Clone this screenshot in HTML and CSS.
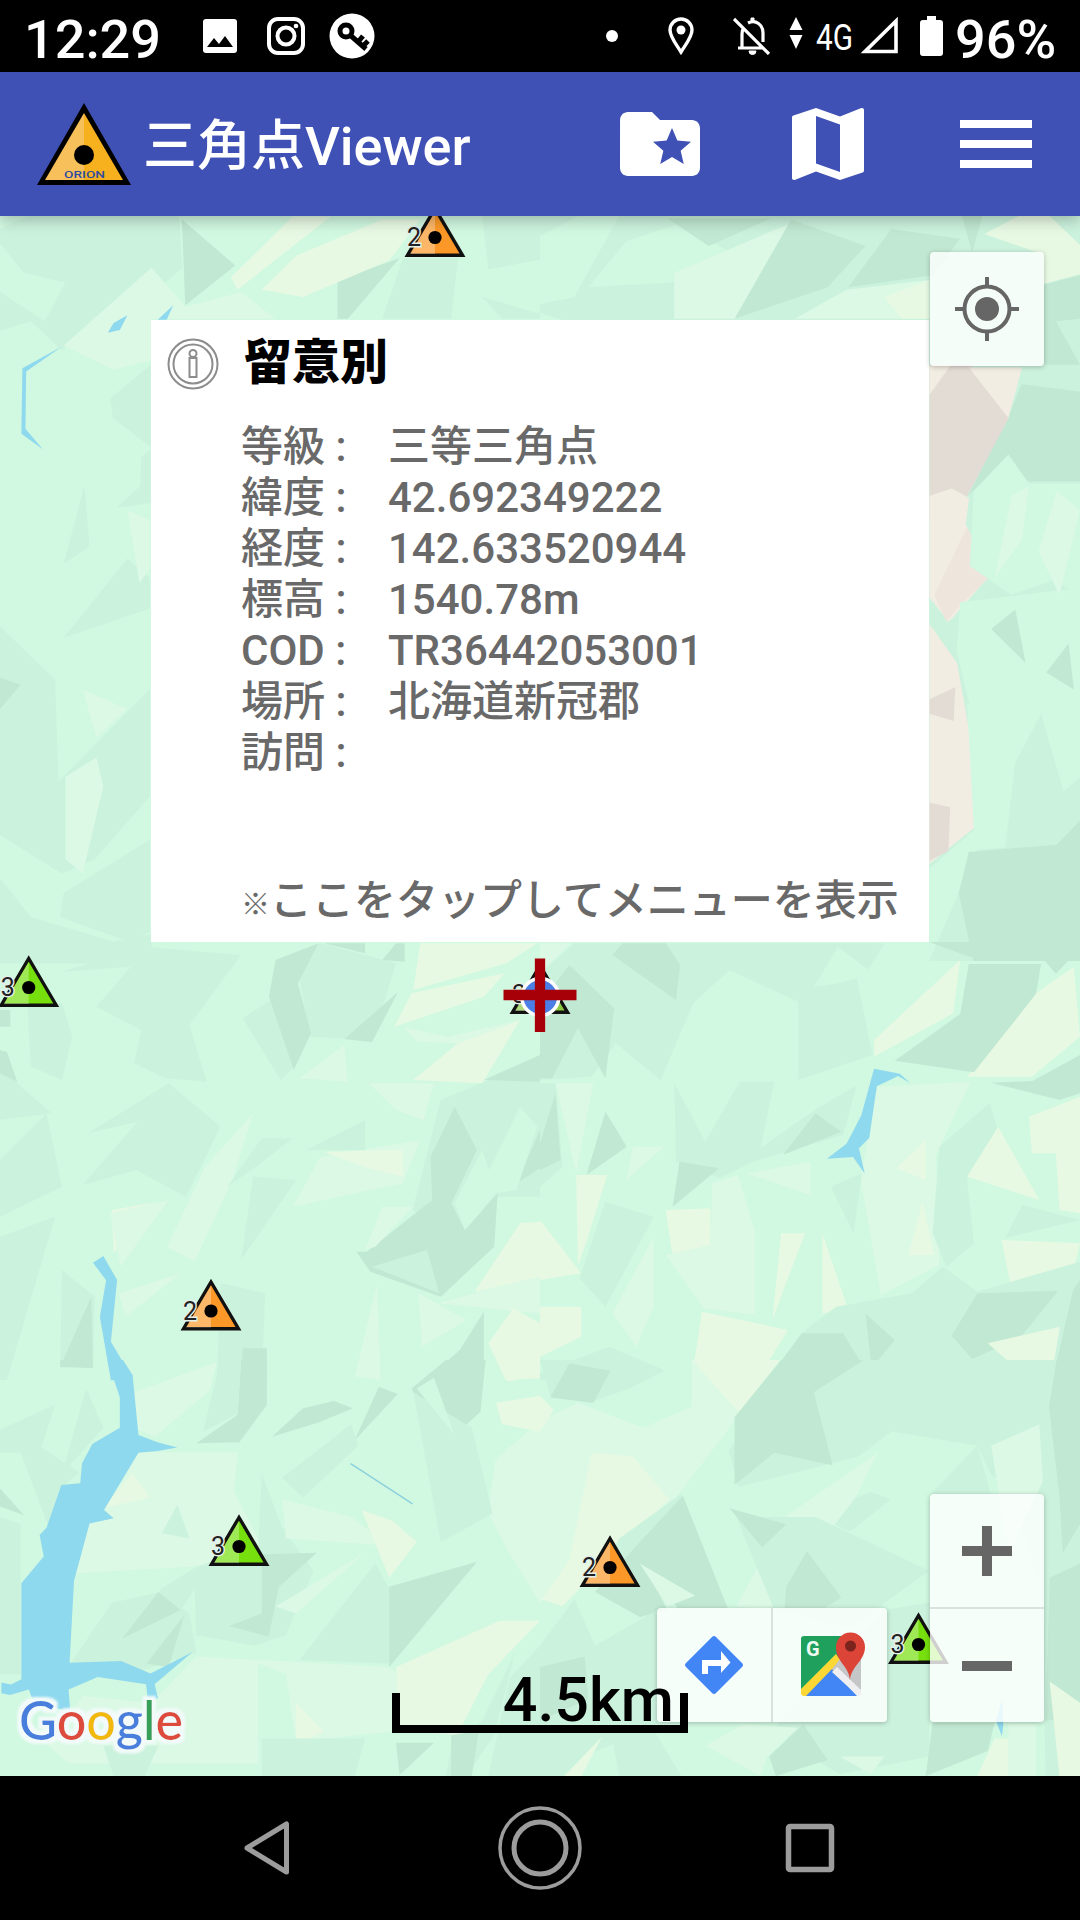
FILE: index.html
```html
<!DOCTYPE html>
<html lang="ja">
<head>
    <meta charset="UTF-8">
    <meta name="viewport" content="width=device-width, initial-scale=1.0">
    <title>三角点Viewer</title>
    <link rel="stylesheet" href="styles.css">
</head>
<body>

    <!-- Status bar -->
    <div class="status-bar">
        <span class="clock">12:29</span>
        <svg class="st-image" width="34" height="34" viewBox="0 0 34 34"><rect width="34" height="34" rx="3" fill="#fff"/><path d="M4 28l7-9 5 6 6-8 8 11z"/></svg>
        <svg class="st-insta" width="38" height="38" viewBox="0 0 38 38" fill="none" stroke="#fff" stroke-width="4"><rect x="2" y="2" width="34" height="34" rx="9"/><circle cx="19" cy="19" r="8.5"/><circle cx="29" cy="9" r="2.3" fill="#fff" stroke="none"/></svg>
        <svg class="st-key" width="46" height="46" viewBox="0 0 46 46"><circle cx="23" cy="23" r="22.5" fill="#fff"/><circle cx="17" cy="18" r="6" fill="none" stroke="#000" stroke-width="5"/><path d="M21 22l16 14M29 29l5-6M34 33l5-5" stroke="#000" stroke-width="5" fill="none"/></svg>
        <span class="spacer"></span>
        <svg class="st-dot" width="12" height="12" viewBox="0 0 12 12"><circle cx="6" cy="6" r="6" fill="#fff"/></svg>
        <svg class="st-pin" width="26" height="38" viewBox="0 0 26 38" fill="none" stroke="#fff" stroke-width="3.4"><path d="M13 35C8 27 2 20 2 13a11 11 0 0 1 22 0c0 7-6 14-11 22z"/><circle cx="13" cy="13" r="4.5" fill="#fff" stroke="none"/></svg>
        <svg class="st-bell" width="38" height="38" viewBox="0 0 38 38" fill="none" stroke="#fff" stroke-width="3.2"><path d="M1 2l35 35M5 31h25M9 30V17c0-3 1-5 2-6M15 6c8-4 15 2 15 10v9"/><path d="M16 34h7a3.500 3.500 0 0 1-7 0zM18 4V1h3v3" fill="#fff" stroke-width="1"/></svg>
        <svg class="st-arrows" width="14" height="32" viewBox="0 0 14 32" fill="#fff"><path d="M7 0l6.500 13H.5zM7 32L.5 18h13z"/></svg>
        <svg class="st-4g" width="40" height="44" viewBox="0 0 40 44"><text x="1" y="36" font-size="37" textLength="37" lengthAdjust="spacingAndGlyphs" fill="#fff">4G</text></svg>
        <svg class="st-signal" width="40" height="40" viewBox="0 0 40 40"><path d="M5 36.500h31V6z" fill="none" stroke="#fff" stroke-width="3.6"/></svg>
        <svg class="st-battery" width="23" height="40" viewBox="0 0 23 40" fill="#fff"><path d="M7 0h9v4h4a3 3 0 0 1 3 3v30a3 3 0 0 1-3 3H3a3 3 0 0 1-3-3V7a3 3 0 0 1 3-3h4z"/></svg>
        <span class="percent">96%</span>
    </div>

    <!-- App header -->
    <div class="header">
        <svg class="logo" width="96" height="84" viewBox="0 0 96 84">
            <path d="M48 1L95 83H1z"/>
            <path d="M48 11L9 78h39z" fill="#f8c05a"/>
            <path d="M48 11v67h39z" fill="#f7b11f"/>
            <circle cx="48" cy="53" r="10"/>
            <text x="28" y="75.500" font-size="9.500" font-weight="500" textLength="41" lengthAdjust="spacingAndGlyphs" fill="#2c4ba0">ORION</text>
        </svg>
        <h1>三角点Viewer</h1>
        <div class="actions">
            <svg width="96" height="96" viewBox="0 0 24 24" fill="#fff"><path d="M20 6h-8l-2-2H4c-1.100 0-1.990.9-1.990 2L2 18c0 1.100.9 2 2 2h16c1.100 0 2-.9 2-2V8c0-1.100-.9-2-2-2zm-2.060 11L15 15.280 12.060 17l.78-3.330-2.590-2.240 3.410-.29L15 8l1.340 3.140 3.410.29-2.590 2.240.78 3.330z"/></svg>
            <svg width="96" height="96" viewBox="0 0 24 24" fill="#fff"><path d="M20.500 3l-.16.03L15 5.100 9 3 3.360 4.900c-.21.07-.36.25-.36.48V20.500c0 .28.22.5.5.5l.16-.03L9 18.900l6 2.100 5.640-1.900c.21-.07.36-.25.36-.48V3.500c0-.28-.22-.5-.5-.5zM15 19l-6-2.110V5l6 2.110V19z"/></svg>
            <svg width="96" height="96" viewBox="0 0 24 24" fill="#fff"><path d="M3 18h18v-2H3v2zm0-5h18v-2H3v2zm0-7v2h18V6H3z"/></svg>
        </div>
    </div>

    <!-- Map -->
    <div class="map">
        <svg class="terrain" width="1080" height="1560" viewBox="0 216 1080 1560">
            <defs>
                <g id="peak">
                    <path d="M0-48.500L-27.500-1.800H27.500z" stroke="#111" stroke-width="3.400"/>
                    <path d="M0-45L-25-3H0z" fill="#fff" opacity=".3"/>
                    <circle cy="-19.500" r="6.600" fill="#000"/>
                </g>
                <filter id="outline" x="-10%" y="-20%" width="120%" height="140%">
                    <feMorphology in="SourceAlpha" operator="dilate" radius="4" result="wide"/>
                    <feGaussianBlur in="wide" stdDeviation="1" result="soft"/>
                    <feFlood flood-color="#f2fbfa"/>
                    <feComposite in2="soft" operator="in"/>
                    <feMerge><feMergeNode/><feMergeNode in="SourceGraphic"/></feMerge>
                </filter>
            </defs>

            <!-- north west -->
            <g transform="translate(0 200) scale(.3444 .4847)">
                <path class="mid" d="M0 60L80 33H520L530 140 380 230 280 240 180 310 90 250 0 270z"/>
                <path class="base" d="M0 90l70 60 120 20-60 80L0 190z"/>
                <path class="dark" d="M528 40l155 95-145 82zM980 165l180-45-150 125h-30z"/>
                <path class="light" d="M185 300L440 140 540 220 700 190 800 245H440V330L330 350z"/>
                <path class="cream" d="M670 160L850 34h110L690 185zM760 185l100-70 250-75h110l-90 85-250 75z"/>
                <path class="mid" d="M1170 120h160l-20 125h-200zM1400 33h168v90l-150 20zM1400 200l168 35v10h-110z"/>
                <path class="mid" d="M320 410l118-70v170l-110-60zM245 590l-60 160 75-35zM370 740L185 903l250-60V780zM410 530l28-15v110l-100 10 70-45z"/>
                <path class="mid" d="M0 880l160 110 10 210 265-190v220l-160 130-95 30L0 1310zM185 1430l250-110v190l-60 20-200-50z"/>
                <path class="dark" d="M0 985l60 15L0 1050z"/>
                <path class="light" d="M190 1190l90-40 20 60-60 180-50-30zM370 640l65 20v100l-30 30zM240 1010l130 40-90 60z"/>
                <path class="mid" d="M0 1400l90 80 240 50 110-15v60H0z"/>
                <path class="water" d="M180 302L65 347 62 482l62 32-50-42 2-118zM370 238l-40 16-17 20 35-6zM503 217l-45 30h26z"/>
            </g>

            <!-- north east -->
            <g transform="translate(540 200) scale(.3444 .4847)">
                <path class="mid" d="M0 33h1568v220H90L0 233z"/>
                <path class="base" d="M0 75l110-42h120L100 200 0 215zM250 85l150-35 160 60-180 60-240 10z"/>
                <path class="light" d="M390 150L720 50 570 245H390z"/>
                <path class="dark" d="M370 38h300L490 95zM730 40l215 55-110 85-270 65zM1020 60l200 20-80 75-245 25zM1225 33h60l-30 75z"/>
                <path class="light" d="M890 185l240-20v80H740z"/>
                <path class="cream" d="M1000 200l130-35v80h-80zM1290 70l100-37h90l88 60v60l-105 20v-60z"/>
                <path class="mid" d="M1130 245h438v1325h-438z"/>
                <path class="dark" d="M1463 175l105-20v240l-170-15-40 70-115 160 110-75 60 25h155V245l-70 5 70 90-105 0z"/>
                <path class="dark" d="M1360 450l208-50v180h-155l-60-55-100 75z"/>
                <path class="sand-dark" d="M1131 340h120l110 110-120 160-110 50z"/>
                <path class="sand" d="M1131 342h60l-60 60zM1245 345h155l-40 105zM1131 610l65-15 50 20-10 55 75 100-110 90-15 10-55-50z"/>
                <path class="sand-mid" d="M1240 675l70 100-90 60-40 35-35-55z"/>
                <path class="sand" d="M1131 875l80 80 60 240-10 100-130 75z"/>
                <path class="sand-dark" d="M1131 1030l75-25-5 70-70-15zM1131 1243l60 10-5 90-55 20z"/>
                <path class="base" d="M1260 600l100-75 60 60h148v230l-80-30-120 30-120-60zM1220 830l350-30v250l-150-10-170 10-40-120z"/>
                <path class="light" d="M1500 600l68 40-60 175-60-90zM1370 610l50-20-20 110-80 80z"/>
                <path class="dark" d="M1310 885l70-40 30 110zM1470 975l65-60 15 95z"/>
                <path class="base" d="M1240 1040l330 0v240l-70 50-230 10-140 230V1380l130-80z"/>
                <path class="mid" d="M1455 1060l65 160 50-30v90l-70 50-150 10 30-180z"/>
                <path class="dark" d="M1245 1345l255-15 68-50v290h-310l-42-140z"/>
            </g>

            <!-- west -->
            <g transform="translate(0 940) scale(.3444 .3333)">
                <path class="mid" d="M180 95L420 20 700 45 550 255 600 425 480 415 390 370 410 270 280 200 380 80zM80 200l100-10 30 100-30 130-90-40zM860 60l70-50 220 60-70 230-180-10z"/>
                <path class="mid" d="M800 170l-95 65 110 185 40-40zM255 580L490 430 640 560 540 770 395 690 240 735 400 545zM0 660L135 520 180 740 0 830zM0 890L160 830 20 1320H0zM0 340l50 90 100 90-150 20z"/>
                <path class="dark" d="M800 60l125-50-60 120 38 150-50 110-72-220zM1000 297l155-140-75 150zM1110 60l40-50h25v55zM940 10h120v30zM0 330l20 5 30 90-50-25zM0 210h30v50H0z"/>
                <path class="cream" d="M1220 10h340l-90 60-270 80zM1195 160l270-60-60 70-260 90zM1200 420l130-110 180-70-110 190zM325 810l110-20-105 150z"/>
                <path class="light" d="M1170 260l130 30 210-50-180 70-120-5zM870 415l130-100 10 110zM1070 430h190l-30 110-80-30zM485 920l110-240 140-160-60 200-110 245zM850 800l80-150 290-50-50 130zM320 820l170-40-140 200z"/>
                <path class="cream" d="M940 635l230-5v80l-100-25z"/>
                <path class="mid" d="M890 630l170-90v90zM660 740l100-145h90l-100 80zM735 710l125 10-160 240z"/>
                <path class="mid" d="M1280 480l140-60h148v350l-120 0-130 110-120-70z"/>
                <path class="dark" d="M1405 420l163-75v80zM1320 500l65 130-75 160 40 80 95-110-10 160-155 150-205-75-40-60 30 0 190-155-5-130zM1500 730l68-160v115z"/>
                <path class="base" d="M1420 690l90-190 50 60-60 190-60 10-90 110-30-80 80-160z"/>
                <path class="mid" d="M1080 980l160-50 35 130z"/>
                <path class="light" d="M1060 930l50-130 90 0-110 120zM1380 1060l188-200v260l-300-30z"/>
                <path class="cream" d="M1510 850l58-5v165l-190 45zM1490 1105l78 45v165l-100 5-50-110z"/>
                <path class="mid" d="M180 990l95 80-5 210h-95zM640 1030l130 30-10 260H630z"/>
                <path class="dark" d="M175 1280l90-210 5 215zM705 1225h70v95h-75zM1235 1320l100-90 70-115v205z"/>
                <path class="light" d="M345 1060l180-60-160 130zM1030 1310l65-280 10 290zM1215 1060l140 80-130 80z"/>
                <path class="water" d="M270 968l30-20 40 72-18 185 63 110v6h-63l-32-190 18-110z"/>
            </g>

            <!-- east -->
            <g transform="translate(540 940) scale(.3444 .3333)">
                <path class="mid" d="M0 100l100-90h900l-60 100-190 75-200-95-105 100-95 230-130-110-70 100-150 10z"/>
                <path class="dark" d="M85 75L215 205l-25 210-80-150-75 150H0V190zM210 45l30-35h125l42 65-12 105z"/>
                <path class="light" d="M0 10h90L0 100z"/>
                <path class="base" d="M795 140l70-120 140 110-60-10z"/>
                <path class="mid" d="M750 160l170-45 45 230-215 75z"/>
                <path class="cream" d="M970 350V300l250-240-20 160zM1240 410l200-250 110-80 18 210-140 120z"/>
                <path class="dark" d="M1130 6h438v20l-70 75-50-60-200 10zM1245 72h210l-15 90-180 235-230-35 190-140zM1310 428l120-5 138-78v115l-60 20z"/>
                <path class="mid" d="M0 430h45l20 250-65 60zM390 430l90 175 100-180h100l-40 200 150-110 130-80-40 150-260 80-100 50-125-50z"/>
                <path class="dark" d="M0 610l45-150 15 200-60 30zM135 705l55-190 62 105zM385 800l20-135 115 20zM705 645l95-125 75 55z"/>
                <path class="light" d="M45 430h110l-50 270zM980 440l270-15-100 220 10 330-170 90-60-350zM250 720l20-100 90 0z"/>
                <path class="mid" d="M1160 620l145-130 25 80-90 150 20 190-80 70-40-100zM845 740l90-40-25 180z"/>
                <path class="cream" d="M1330 560l120 220-210-70zM1420 530l148-60v350l-60-10-10-170-70 0zM1340 900l228 10-30 130-170 5zM1035 685l85-85v120zM1070 945l40-160 35 160z"/>
                <path class="cream" d="M105 705h90l-60 200-25 70zM0 840l120 160-120 20zM365 810l130-5v110l-110 35zM700 880h70l-60 160-35 100zM820 880l75 230-75 10zM0 1100h120v90L0 1250zM470 1115l250 55-90 150H440z"/>
                <path class="light" d="M500 730l75-25 50 170v250l-150-20-110-160 130-30zM600 700l185-35v100zM330 890v210l-50 120-70-100z"/>
                <path class="mid" d="M190 785l140 45-140 270-75-85z"/>
                <path class="mid" d="M860 1100l220-40 90-80 100 75 298-90v355H660l110-150z"/>
                <path class="dark" d="M760 1180h120l50 85-70 55H660zM945 1120l85 80-67 85zM1270 1060l235-8-110 140-140 65-60-70zM1568 1020v300h-80l60-270z"/>
                <path class="cream" d="M1300 1210l210-50-20 120-90 20z"/>
                <path class="mid" d="M1350 895l50-100 168 45z"/>
                <path class="mid" d="M0 1300l200-80 160 70-80 30H0z"/>
                <path class="water" d="M970 386l75 15 30 29-35-22-62 31-22 155-30 31 17 76-34-50-76 5 57-45 43-85z"/>
            </g>

            <!-- south west -->
            <g transform="translate(0 1360) scale(.3444 .3571)">
                <path class="mid" d="M0 195l160-70-40 120 110 70-60 50-30 100L60 260H0zM250 80l50 110-120 130zM0 440l60 20v420H0z"/>
                <path class="dark" d="M0 360l70 75L0 410zM175 0h95v20h-95zM700 0h75v125l-80 105-125 3 120-80z"/>
                <path class="mid" d="M640 0h60l-10 150-100 50z"/>
                <path class="light" d="M390 90l240-85-20 80-160 130-50-20zM400 258l290 0-10 110 90 170-200 40-360 20 30-160 60-30zM1568 170l-130 110-20 150 60 110 90 140z"/>
                <path class="cream" d="M385 315l50 70-135 30z"/>
                <path class="mid" d="M515 405l35 95-80-15zM470 640l100-60 180-60 10-200 60 150 90 120-80 180-90 30-170-30-5-130-110 170-70 20-75-5z"/>
                <path class="mid" d="M205 850l120-170 140-30 85 60 20 110-160 50z"/>
                <path class="dark" d="M790 215l90-80 90-20 55 20-100 40zM1030 225l70-150 55 20zM1195 80l100-80h115l-15 145-120 105z"/>
                <path class="mid" d="M820 330l200-150 20 60-160 145zM1200 90l170 100 60 240-150 80zM870 840l220-270 40 70v210z"/>
                <path class="base" d="M1210 80l50-30 60 160z"/>
                <path class="dark" d="M1130 635l255-70-255 295zM760 545l160-5-110 95-30 140-115-30 95-35zM355 780l105-130 65 50zM425 850l110-135-45 145z"/>
                <path class="light" d="M800 690l260-150-200 170zM820 390l200 50 110 80-300-20zM570 830l560 30 200 160-470 50-30-190-80-30v280H200l-60-50 100-140 200 20z"/>
                <path class="cream" d="M1050 420l90 30 70 60-80 100zM1150 860l300-130 118 0-150 150-90 170-170-15zM860 960l80 80-80 40zM1440 120l128-20v100l-110-20zM1455 0h110v40l-90 20z"/>
                <path class="mid" d="M1400 1010l95-190-60 230-80 115h-60l20-100zM1480 890l88-90v365h-150zM760 1060l300 0-30 105H760zM300 1080h160l-40 85h-90z"/>
                <path class="dark" d="M1150 1072h110l-100 90zM1310 1050l80-10-20 125h-60z"/>
                <path class="water" d="M312 0h45l28 42 17 168 55 20 58 15-58 10-55 5-100 160 28 23-70 15-45 160-13 230 150 -5 85 35 122-60-110 90 10 40h-30l-5-40-140-20-85 35 5 60-105-20-15-40-55 15-25-5v-30l28 6 30-15V625l65-75-12-60 20-20 43-120 55-5 5-55 30-55 80-45V105z"/>
                <path d="M1018 290l180 113" stroke="#8ad0dc" stroke-width="4"/>
            </g>

            <!-- south east -->
            <g transform="translate(540 1360) scale(.3444 .3571)">
                <path class="light" d="M0 170l110-50 190 70 140-60v-130h260L400 380 250 490 0 680z"/>
                <path class="cream" d="M445 0h250L580 150 460 20zM150 260l120 10 105 120-180 170-130 130-60-20 80-110zM0 100l40 40-40 60z"/>
                <path class="mid" d="M0 0h200l160 30-100 50-120 40-110-20z"/>
                <path class="dark" d="M85 10l120 20-50 90-125-15z"/>
                <path class="mid" d="M700 0h868v1165h-100l-10-520-100-300-260-120-270 70-250 60-30-100z"/>
                <path class="base" d="M680 450l340-250 250 40 100 200-400 150-200 110-330-20z"/>
                <path class="dark" d="M700 0h180l60 0-145 90 55 205-170-35-115 90V160z"/>
                <path class="mid" d="M1160 0h150l-30 90 170 60-20 60-240 20zM1270 240l40 140h-180zM790 430l170-60 60 20-120 90z"/>
                <path class="light" d="M570 690l140-250 270-180-60 120-190 240-50 80zM1310 240l140-60 10 160-100 200z"/>
                <path class="mid" d="M570 440l230 0 330 150-230 160-220-50zM230 500l180-125 120 320-370-60z"/>
                <path class="dark" d="M160 650l120-130 135-140 130 315H400L310 590l60 110-80 20zM550 415l165 45-70 65zM775 535l100 130-50 30H710l5-60z"/>
                <path class="light" d="M290 570l160 90-80 30z"/>
                <path class="dark" d="M1500 0h68v460l-50 80-10-160-30-250zM1480 610l88-40v430l-100 10z"/>
                <path class="mid" d="M0 800l100-130 60 130 180-100v320L0 1165z"/>
                <path class="mid" d="M1000 700l130-20v430l-260 50-200-120z"/>
                <path class="dark" d="M0 860l130-30 10 120-140 60zM665 1110l100-90 70 100-150 45zM1140 1015h180l-20 80-180 70z"/>
                <path class="light" d="M480 1080l110-60 160 10-90 80-20 55zM1360 1020l80 0v145h-80zM870 1110h130l-40 50z"/>
                <path class="mid" d="M210 1060l110-40 90 145H230zM100 1020l80 20-70 125H0z"/>
                <path class="cream" d="M1320 1060l40 0v105h-90zM1480 900l88 60v205h-60zM70 1165l110-110-60 110z"/>
                <path class="water" d="M1342 950l-18 60 17 43 4-30z"/>
            </g>

            <!-- survey points -->
            <g class="peak-label">
                <g transform="translate(435 257)" fill="#fb9827"><use href="#peak"/><text x="-28" y="-11">2</text></g>
                <g transform="translate(28.700 1007)" fill="#76df0d"><use href="#peak"/><text x="-28" y="-11">3</text></g>
                <g transform="translate(211 1330.500)" fill="#fb9827"><use href="#peak"/><text x="-28" y="-11">2</text></g>
                <g transform="translate(239 1566)" fill="#76df0d"><use href="#peak"/><text x="-28" y="-11">3</text></g>
                <g transform="translate(610 1587)" fill="#fb9827"><use href="#peak"/><text x="-28" y="-11">2</text></g>
                <g transform="translate(918.500 1664)" fill="#76df0d"><use href="#peak"/><text x="-28" y="-11">3</text></g>
                <g transform="translate(540 1014)" fill="#8bc943"><use href="#peak"/><text x="-28" y="-11">3</text></g>
            </g>
            <circle cx="540.300" cy="997" r="18.500" fill="#4b7fe6" stroke="#fff" stroke-width="3.500"/>
            <path d="M503.500 995h73M540 958.500v73.500" stroke="#a80008" stroke-width="10.300"/>

            <!-- Google logo -->
            <text class="google" x="19" y="1740" textLength="164" lengthAdjust="spacingAndGlyphs" filter="url(#outline)"><tspan fill="#4a7fdc">G</tspan><tspan fill="#dd4b3e">o</tspan><tspan fill="#f2b90c">o</tspan><tspan fill="#4a7fdc">g</tspan><tspan fill="#34a058">l</tspan><tspan fill="#dd4b3e">e</tspan></text>
        </svg>

        <div class="info-window">
            <svg class="info-icon" width="52" height="52" viewBox="0 0 52 52" fill="none" stroke="#8c8c8c" stroke-width="2"><circle cx="26" cy="26" r="24.500"/><circle cx="26" cy="26" r="19.500"/><circle cx="26" cy="15.500" r="3.500"/><path d="M22.500 20h7v19h-7z"/></svg>
            <div class="info-body">
                <h2>留意別</h2>
                <dl>
                    <dt>等級 :</dt><dd>三等三角点</dd>
                    <dt>緯度 :</dt><dd>42.692349222</dd>
                    <dt>経度 :</dt><dd>142.633520944</dd>
                    <dt>標高 :</dt><dd>1540.78m</dd>
                    <dt>COD :</dt><dd>TR36442053001</dd>
                    <dt>場所 :</dt><dd>北海道新冠郡</dd>
                    <dt>訪問 :</dt><dd></dd>
                </dl>
                <p><span class="mark">※</span>ここをタップしてメニューを表示</p>
            </div>
        </div>

        <div class="control locate">
            <svg width="64" height="64" viewBox="0 0 64 64" fill="none" stroke="#666" stroke-width="4"><circle cx="32" cy="32" r="22.500"/><circle cx="32" cy="32" r="12" fill="#666" stroke="none"/><path d="M32 0v10M32 54v10M0 32h10M54 32h10"/></svg>
        </div>

        <div class="control zoom">
            <div class="cell"><svg width="50" height="50" viewBox="0 0 50 50"><path d="M0 25h50M25 0v50" stroke="#666" stroke-width="10"/></svg></div>
            <div class="cell"><svg width="50" height="50" viewBox="0 0 50 50"><path d="M0 25h50" stroke="#666" stroke-width="10"/></svg></div>
        </div>

        <div class="control toolbar">
            <div class="cell"><svg width="60" height="60" viewBox="0 0 60 60"><path d="M28 2q2-2 4 0l26 26q2 2 0 4L32 58q-2 2-4 0L2 32q-2-2 0-4z" fill="#4285f4"/><path d="M18 39V25h19v-9l9.500 11.500L37 38v-7H24v8z" fill="#fff"/></svg></div>
            <div class="cell">
                <svg class="maps-icon" width="66" height="66" viewBox="0 0 66 66">
                    <path d="M5 5h38v20L2 63V8q0-3 3-3z" fill="#1fa15d"/>
                    <path d="M2 58L37 23l7 10L9 65H5q-3 0-3-3z" fill="#fdd835"/>
                    <path d="M33 38l25 27H7z" fill="#4285f4"/>
                    <path d="M33 38l8-10 21-5v37z" fill="#c4c6c7"/>
                    <path d="M33 41l5-5 24 23v3q0 3-3 3z" fill="#efeff1"/>
                    <path d="M51 49c-1-14-14-18-14-33a14.500 14.500 0 0 1 29 0c0 14-14 19-15 33z" fill="#db4437"/>
                    <circle cx="51.500" cy="15" r="5.500" fill="#7b231d"/>
                    <text x="7" y="25" font-size="20" font-weight="700" fill="#eefaf2">G</text>
                </svg>
            </div>
        </div>

        <div class="scale">4.5km</div>
    </div>

    <!-- Navigation bar -->
    <div class="nav-bar">
        <svg width="90" height="90" viewBox="0 0 90 90" fill="none" stroke="#9c9c9c"><path d="M22 45L61.500 21v48z" stroke-width="5" stroke-linejoin="round"/></svg>
        <svg width="90" height="90" viewBox="0 0 90 90" fill="none" stroke="#9c9c9c"><circle cx="45" cy="45" r="40" stroke-width="3.500"/><circle cx="45" cy="45" r="26" stroke-width="5"/></svg>
        <svg width="90" height="90" viewBox="0 0 90 90" fill="none" stroke="#9c9c9c"><rect x="23.500" y="23.500" width="43" height="43" rx="1.500" stroke-width="5.500"/></svg>
    </div>

</body>
</html>
```
FILE: styles.css
```css
body {
    margin: 0;
    width: 1080px;
    height: 1920px;
    display: flex;
    flex-direction: column;
    overflow: hidden;
    font-family: Roboto, "Noto Sans CJK JP", sans-serif;
    background: #000;
}
svg {
    display: block;
    flex: none;
}

/* Status bar */
.status-bar {
    height: 72px;
    display: flex;
    align-items: center;
    background: #000;
    color: #fff;
    flex: none;
}
.clock, .percent {
    font-size: 54px;
    font-weight: 500;
    line-height: 72px;
    padding-top: 8px;
}
.clock {
    width: 179px;
    padding-left: 24px;
}
.percent {
    width: 125px;
    margin-left: 12px;
}
.spacer {
    flex: 1;
}
.st-insta {
    margin-left: 30px;
}
.st-key {
    margin-left: 24px;
}
.st-pin {
    margin-left: 50px;
}
.st-bell {
    margin-left: 39px;
}
.st-arrows {
    margin-left: 18px;
    margin-bottom: 7px;
}
.st-4g {
    margin-left: 12px;
    margin-bottom: 1px;
}
.st-signal {
    margin-left: 5px;
    margin-bottom: 2px;
}
.st-battery {
    margin-left: 20px;
}

/* Header */
.header {
    height: 144px;
    display: flex;
    align-items: center;
    padding: 0 36px;
    background: #3f51b5;
    color: #fff;
    flex: none;
    position: relative;
    z-index: 1;
    box-shadow: 0 4px 14px rgba(0, 0, 0, 0.25);
}
.header h1 {
    margin: 5px 0 0 11px;
    font-size: 54px;
    font-weight: 500;
    line-height: 80px;
}
.actions {
    display: flex;
    gap: 72px;
    margin-left: auto;
}

/* Map */
.map {
    position: relative;
    height: 1560px;
    flex: none;
    overflow: hidden;
    background: #d1f8e1;
}
.base {
    fill: #d1f8e1;
}
.light {
    fill: #dbf9e5;
}
.cream {
    fill: #e7f9e3;
}
.mid {
    fill: #cbf2dd;
}
.dark {
    fill: #c1e8d2;
}
.sand {
    fill: #f2ede3;
}
.sand-mid {
    fill: #eee5dd;
}
.sand-dark {
    fill: #e2dcd5;
}
.water {
    fill: #8fd9ef;
}
.peak-label text {
    font-size: 25px;
    fill: #222;
    stroke: #e4f0ea;
    stroke-width: 3px;
    paint-order: stroke;
}
.google {
    font-family: Lato, sans-serif;
    font-size: 54px;
    font-weight: 500;
}

/* Info window */
.info-window {
    position: absolute;
    left: 151px;
    top: 104px;
    width: 778px;
    height: 622px;
    box-sizing: border-box;
    display: flex;
    gap: 22px;
    padding: 18px 16px 0;
    background: #fff;
}
.info-body {
    color: #696969;
    font-size: 42px;
    font-weight: 500;
    white-space: nowrap;
}
.info-body h2 {
    margin: 1px 0 34px 3px;
    font-size: 48px;
    line-height: 48px;
    font-weight: 900;
    color: #000;
}
.info-body dl {
    margin: 0;
    display: grid;
    grid-template-columns: 147px auto;
    grid-auto-rows: 51px;
    line-height: 51px;
}
.info-body dd {
    margin: 0;
}
.info-body p {
    margin: 97px 0 0;
    line-height: 51px;
}
.mark {
    font-size: 29px;
    font-weight: 900;
}

/* Map buttons */
.control {
    position: absolute;
    display: flex;
    background: rgba(255, 255, 255, 0.8);
    border-radius: 4px;
    box-shadow: 0 1px 5px rgba(0, 0, 0, 0.25);
}
.locate {
    left: 930px;
    top: 36px;
    width: 114px;
    height: 114px;
    align-items: center;
    justify-content: center;
}
.zoom {
    left: 930px;
    top: 1278px;
    width: 114px;
    height: 228px;
    flex-direction: column;
}
.toolbar {
    left: 657px;
    top: 1392px;
    width: 230px;
    height: 114px;
}
.cell {
    flex: 1;
    display: flex;
    align-items: center;
    justify-content: center;
}
.zoom .cell + .cell {
    border-top: 2px solid #d9e2de;
}
.toolbar .cell + .cell {
    border-left: 2px solid #d9e2de;
}
.maps-icon {
    margin-left: 3px;
    margin-bottom: 2px;
}
.scale {
    position: absolute;
    left: 392px;
    top: 1477px;
    width: 296px;
    height: 40px;
    box-sizing: border-box;
    border: 8px solid #000;
    border-top: 0;
    padding-right: 6px;
    display: flex;
    align-items: flex-end;
    justify-content: flex-end;
    font-size: 61px;
    line-height: 50px;
    font-weight: 500;
    color: #000;
}

/* Navigation bar */
.nav-bar {
    height: 144px;
    flex: none;
    display: flex;
    justify-content: center;
    align-items: center;
    gap: 180px;
    background: #000;
}
```
